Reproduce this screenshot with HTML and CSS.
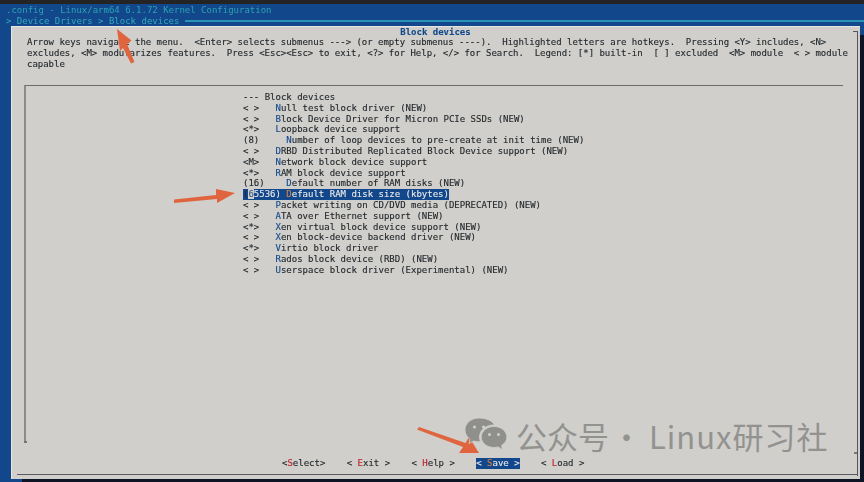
FILE: index.html
```html
<!DOCTYPE html>
<html lang="en">
<head>
<meta charset="utf-8">
<title>Block devices</title>
<link rel="stylesheet" href="styles.css">
</head>
<body>
<div class="screen">
  <header class="head">
    <div class="head-line">.config - Linux/arm64 6.1.72 Kernel Configuration</div>
    <div class="crumb"><span>&gt; Device Drivers &gt; Block devices </span><i class="crumb-rule"></i></div>
  </header>
  <main class="dialog">
    <div class="dialog-title">Block devices</div>
    <pre class="help">Arrow keys navigate the menu.  &lt;Enter&gt; selects submenus ---&gt; (or empty submenus ----).  Highlighted letters are hotkeys.  Pressing &lt;Y&gt; includes, &lt;N&gt;
excludes, &lt;M&gt; modularizes features.  Press &lt;Esc&gt;&lt;Esc&gt; to exit, &lt;?&gt; for Help, &lt;/&gt; for Search.  Legend: [*] built-in  [ ] excluded  &lt;M&gt; module  &lt; &gt; module
capable</pre>
    <section class="menu-box">
      <pre class="menu">--- Block devices
&lt; &gt;   <b>N</b>ull test block driver (NEW)
&lt; &gt;   <b>B</b>lock Device Driver for Micron PCIe SSDs (NEW)
&lt;*&gt;   <b>L</b>oopback device support
(8)     <b>N</b>umber of loop devices to pre-create at init time (NEW)
&lt; &gt;   <b>D</b>RBD Distributed Replicated Block Device support (NEW)
&lt;M&gt;   <b>N</b>etwork block device support
&lt;*&gt;   <b>R</b>AM block device support
(16)    <b>D</b>efault number of RAM disks (NEW)
<span class="sel"><span class="paren">(</span><span class="cursor">6</span>5536) <b>D</b>efault RAM disk size (kbytes)</span>
&lt; &gt;   <b>P</b>acket writing on CD/DVD media (DEPRECATED) (NEW)
&lt; &gt;   <b>A</b>TA over Ethernet support (NEW)
&lt;*&gt;   <b>X</b>en virtual block device support (NEW)
&lt; &gt;   <b>X</b>en block-device backend driver (NEW)
&lt;*&gt;   <b>V</b>irtio block driver
&lt; &gt;   <b>R</b>ados block device (RBD) (NEW)
&lt; &gt;   <b>U</b>serspace block driver (Experimental) (NEW)</pre>
    </section>
    <nav class="buttons">
      <span class="btn">&lt;<b>S</b>elect&gt;</span>
      <span class="btn">&lt; <b>E</b>xit &gt;</span>
      <span class="btn">&lt; <b>H</b>elp &gt;</span>
      <span class="btn btn-on">&lt; <b>S</b>ave &gt;</span>
      <span class="btn">&lt; <b>L</b>oad &gt;</span>
    </nav>
    <i class="tick tick-right"></i>
    <i class="tick tick-left"></i>
  </main>
</div>

<svg class="arrow arrow-top" viewBox="0 0 30 40" width="30" height="40"><path d="M1 1 L15.500 12.500 L11 16 L18.500 34 L15 35.500 L7 20 L4 23 Z"/></svg>
<svg class="arrow arrow-mid" viewBox="0 0 62 26" width="62" height="26"><path d="M0 12.500 L42 8 L42 2 L61 6 L43 16 L43 12 L0 16 Z"/></svg>
<svg class="arrow arrow-low" viewBox="0 0 66 48" width="66" height="48"><path d="M0 2.500 L2 0 L48.500 16 L52 10 L62 26 L42 26 L46 20 Z"/></svg>

<div class="mark">
  <svg class="mark-icon" viewBox="0 0 44 40" width="44" height="40">
    <path class="bub" d="M15 1C7 1 1 6.500 1 13c0 3.800 2 7 5 9.200L5 26.500l4.800-2.500c1.700.5 3.400.8 5.200.8 .5 0 1 0 1.500-.1C15.800 23 15.500 21.500 15.500 20c0-6.800 6.300-12 14-12 .3 0 .6 0 .8 0C28.700 3.900 22.400 1 15 1Z"/>
    <circle class="eye" cx="10.500" cy="10" r="1.600"/><circle class="eye" cx="19.500" cy="10" r="1.600"/>
    <path class="bub" d="M30 9.500c-7 0-12.800 4.700-12.800 10.500S23 30.500 30 30.500c1.400 0 2.800-.2 4-.6l4.500 2.600-1-4c3.300-2 5.400-4.900 5.400-8.500C42.900 14.200 37 9.500 30 9.500Z"/>
    <circle class="eye" cx="25.500" cy="17.500" r="1.500"/><circle class="eye" cx="34.500" cy="17.500" r="1.500"/>
  </svg>
  <span class="mark-text">公众号</span>
  <span class="mark-text mark-dot">·</span>
  <span class="mark-text mark-name">Linux研习社</span>
</div>
</body>
</html>
```
FILE: styles.css
```css
* { box-sizing: border-box; }
html, body { margin: 0; height: 100%; }
body {
  width: 864px;
  height: 482px;
  overflow: hidden;
  background: #0f1424;
  position: relative;
  font-family: "DejaVu Sans Mono", "Liberation Mono", monospace;
  font-size: 9px;
  color: #23282b;
}
body::before {
  content: "";
  display: block;
  height: 4px;
  background: #242424;
}
pre { margin: 0; font: inherit; }
b { font-weight: normal; }
.screen {
  height: 478px;
  background:
    linear-gradient(#12488b, #12488b) 0 0 / 100% 31px no-repeat,
    linear-gradient(#12488b, #12488b) 0 0 / 22px 100% no-repeat;
  display: flex;
  flex-direction: column;
  filter: blur(.3px);
}
.head { height: 22px; padding: 1px 0 0 6px; line-height: 10.800px; }
.head-line { height: 11px; color: #2aa1b3; }
.crumb { display: flex; align-items: center; color: #33a9bd; margin-top: -.2px; }
.crumb span { white-space: pre; }
.crumb-rule { flex: 1; height: 1.500px; background: #2a93b3; }
.dialog {
  width: 849px;
  margin-left: 11px;
  height: 453px;
  background: #d0cfcc;
  padding: 0 16px 0 13px;
  display: flex;
  flex-direction: column;
  position: relative;
  box-shadow: inset 1px 1px 0 #e6e5e2;
  line-height: 10.800px;
  -webkit-text-stroke: .12px currentColor;
}
.dialog-title { text-align: center; color: #12488b; font-weight: bold; padding: 1px 0 0 3px; height: 11px; }
.help { padding: 0 0 0 3px; height: 48px; letter-spacing: -.018px; }
.menu-box {
  width: 819px;
  height: 358px;
  border-top: 1px solid #6c6c6c;
  border-left: 2px solid #8b8b8b;
  padding: 6px 0 0 217px;
}
.menu b { color: #12488b; }
.sel { display: inline-block; background: #12488b; color: #e8e8e8; }
.sel b { color: #d08040; }
.paren { color: #23282b; }
.cursor { background: #d0cfcc; color: #3a5f8f; }
.buttons { display: flex; gap: 21.400px; padding-left: 258px; margin-top: 15px; white-space: pre; }
.btn b { color: #c01c28; }
.btn-on { background: #12488b; color: #e8e8e8; }
.btn-on b { color: #d08040; }
.dialog::after {
  content: "";
  position: absolute;
  left: 6px; right: 2px; top: 448px;
  height: 1px;
  background: #5a5a5e;
}
.dialog::before {
  content: "";
  position: absolute;
  top: 5px; right: 2px; height: 444px;
  width: 4px;
  border-top: 1px solid #55555a;
  border-right: 1px solid #55555a;
}
.tick { position: absolute; height: 1.500px; width: 3px; background: #77777a; }
.tick-right { right: 3px; top: 426px; }
.tick-left { left: 13px; top: 415px; }
.arrow { position: absolute; fill: #e0653f; }
.arrow-top { left: 116px; top: 28px; }
.arrow-mid { left: 174px; top: 187px; }
.arrow-low { left: 417px; top: 427px; }
.mark {
  position: absolute;
  left: 463px; top: 415px;
  display: flex;
  align-items: center;
}
.mark-icon { width: 46px; height: 40px; margin-top: 2px; margin-right: 7px; }
.bub { fill: #8f8f8c; stroke: #d0cfcc; stroke-width: .8; }
.eye { fill: #d0cfcc; }
.mark-text { font-family: "Noto Sans CJK SC", "Noto Sans", sans-serif; font-size: 31px; color: #92928f; line-height: 40px; white-space: pre; }
.mark-dot { margin-left: 2px; }
.mark-name { margin-left: 7px; letter-spacing: 1px; }
```
